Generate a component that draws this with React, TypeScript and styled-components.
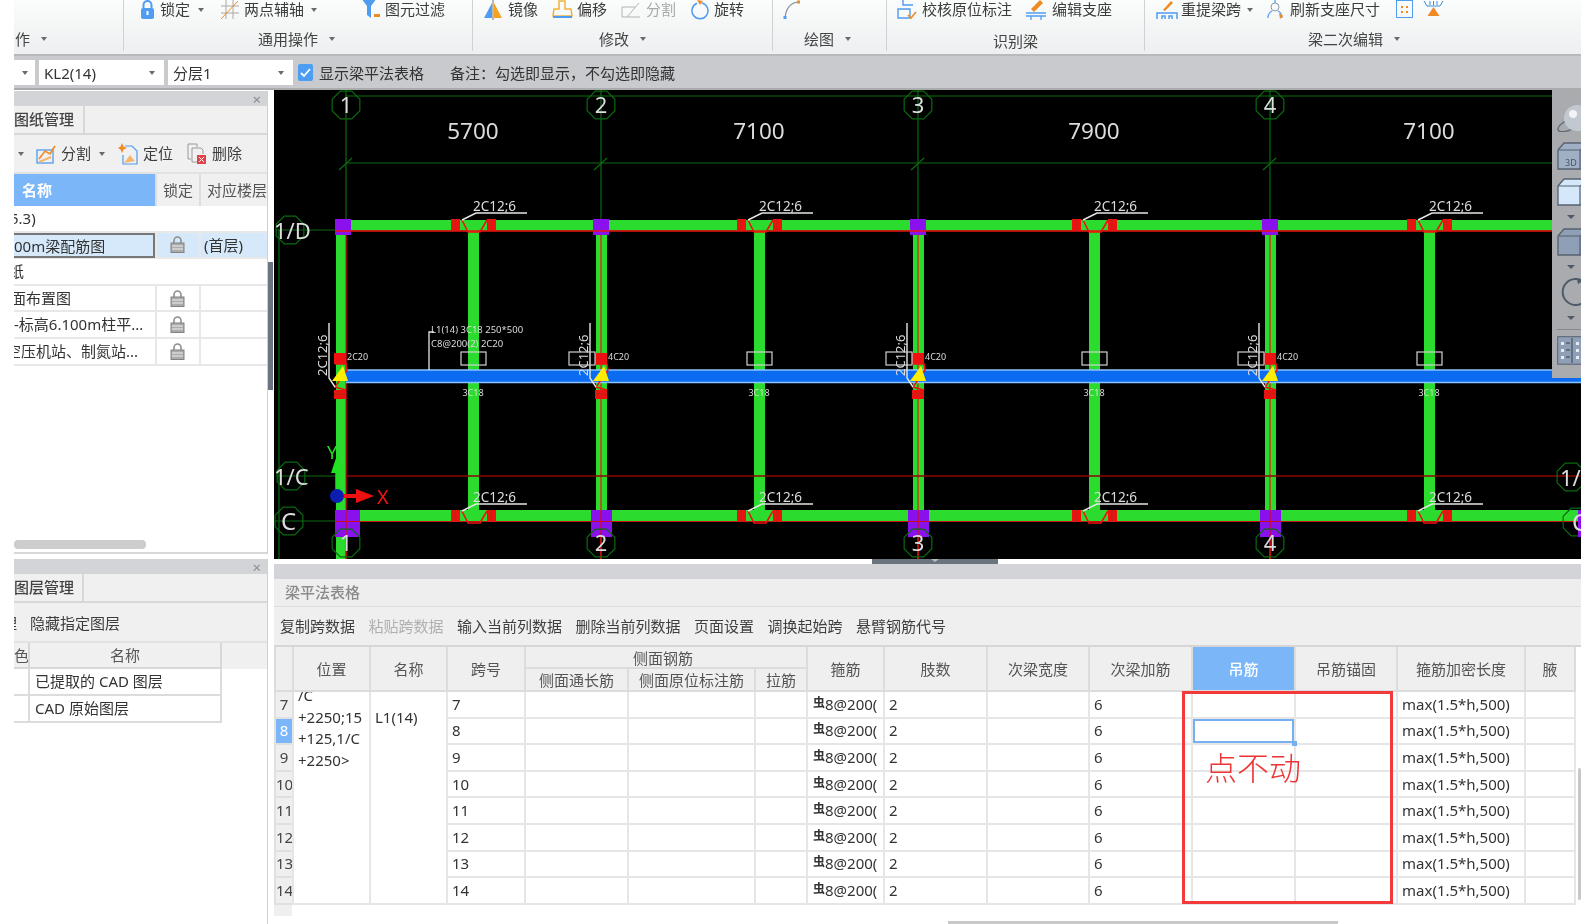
import React from "react";
import styled, { createGlobalStyle } from "styled-components";

const FONT = `"Noto Sans", "Noto Sans CJK SC", "Liberation Sans", sans-serif`;

const Global = createGlobalStyle`
  html, body { margin: 0; padding: 0; background: #fff; }
  body { font-family: ${FONT}; color: #3a3a3a; overflow: hidden; }
  * { box-sizing: border-box; }
`;

const Page = styled.div`
  width: 1594px;
  height: 924px;
  padding: 0 13px 0 14px;
  overflow: hidden;
  background: #fff;
  filter: blur(0.4px);
`;

/* ---------- ribbon ---------- */
const Ribbon = styled.div`
  display: flex;
  height: 56px;
  background: linear-gradient(#fbfcfc, #edeff0);
  border-bottom: 2px solid #b7b9bb;
`;
const Group = styled.div<{ $w: number; $pad: number; $last?: boolean }>`
  width: ${(p) => p.$w}px;
  flex: none;
  height: 51px;
  padding-left: ${(p) => p.$pad}px;
  border-right: ${(p) => (p.$last ? "none" : "1px solid #cfd1d3")};
  display: flex;
  flex-direction: column;
`;
const Tools = styled.div`
  display: flex;
  align-items: center;
  height: 19px;
  overflow: visible;
`;
const Tool = styled.div<{ $ml?: number; $gap?: number; $off?: boolean }>`
  display: flex;
  align-items: center;
  gap: ${(p) => p.$gap ?? 5}px;
  margin-left: ${(p) => p.$ml ?? 0}px;
  font-size: 15px;
  line-height: 19px;
  white-space: nowrap;
  color: ${(p) => (p.$off ? "#a8a8a8" : "#3c3c3c")};
`;
const Caret = styled.span<{ $ml?: number }>`
  display: inline-block;
  margin-left: ${(p) => p.$ml ?? 3}px;
  border-top: 4px solid #6a6a6a;
  border-left: 3.5px solid transparent;
  border-right: 3.5px solid transparent;
`;
const GroupLabel = styled.div<{ $pad: number; $drop?: number }>`
  display: flex;
  align-items: center;
  gap: 8px;
  margin-top: ${(p) => 10 + (p.$drop ?? 0)}px;
  padding-left: ${(p) => p.$pad}px;
  font-size: 15px;
  line-height: 20px;
  white-space: nowrap;
  color: #444;
`;

/* ---------- property bar ---------- */
const PropBar = styled.div`
  height: 34px;
  padding: 4px 0 3px;
  display: flex;
  align-items: stretch;
  gap: 4px;
  background: #c8cacd;
  border-bottom: 2px solid #a9abad;
  font-size: 15px;
`;
const Combo = styled.div<{ $w: number }>`
  width: ${(p) => p.$w}px;
  padding-left: 5px;
  padding-right: 9px;
  background: #fff;
  display: flex;
  align-items: center;
  justify-content: space-between;
  color: #333;
`;
const Check = styled.span`
  width: 15px;
  height: 17px;
  margin: 4px 2px 0 1px;
  background: #4d9df2;
  border-radius: 2px;
  display: flex;
  align-items: center;
  justify-content: center;
`;
const BarText = styled.span<{ $ml?: number }>`
  margin-left: ${(p) => p.$ml ?? 0}px;
  line-height: 27px;
  color: #333;
`;

/* ---------- main ---------- */
const Main = styled.div`
  display: flex;
  height: 834px;
`;
const LeftCol = styled.div`
  width: 254px;
  flex: none;
  padding-top: 1px;
  display: flex;
  flex-direction: column;
  gap: 5px;
`;
const VSplit = styled.div`
  width: 6px;
  flex: none;
  padding-top: 172px;
`;
const VHandle = styled.div`
  width: 5px;
  height: 128px;
  background: #69747e;
`;
const RightCol = styled.div`
  flex: 1;
  min-width: 0;
  display: flex;
  flex-direction: column;
`;
const Panel = styled.div<{ $h?: number; $grow?: boolean }>`
  ${(p) => (p.$h ? `height:${p.$h}px;` : "")}
  ${(p) => (p.$grow ? "flex:1;" : "")}
  background: #fff;
  border-right: 1px solid #d0d0d0;
  display: flex;
  flex-direction: column;
  position: relative;
`;
const TitleBar = styled.div`
  height: 15px;
  flex: none;
  background: #d2d4d8;
  display: flex;
  align-items: center;
  justify-content: flex-end;
  padding-right: 6px;
  color: #8a8c90;
  font-size: 15px;
`;
const TabRow = styled.div<{ $h: number }>`
  height: ${(p) => p.$h}px;
  flex: none;
  background: #f0f0f0;
  border-bottom: 2px solid #d8d8d8;
  display: flex;
`;
const Tab = styled.div<{ $w: number }>`
  width: ${(p) => p.$w}px;
  border-right: 2px solid #d8d8d8;
  font-size: 15px;
  line-height: 27px;
  color: #444;
  font-weight: 500;
`;
const PanelTools = styled.div<{ $h: number; $pt?: number }>`
  height: ${(p) => p.$h}px;
  flex: none;
  background: #f0f0f0;
  display: flex;
  align-items: center;
  overflow: hidden;
  padding-top: ${(p) => p.$pt ?? 0}px;
  font-size: 15px;
  color: #444;
  border-bottom: 2px solid #e2e2e2;
`;
const DrawHead = styled.div`
  display: grid;
  grid-template-columns: 141px 44px 68px;
  height: 32px;
  flex: none;
  background: #f0f0f0;
  font-size: 15px;
  color: #555;
`;
const NameHead = styled.div`
  background: #7ab6f8;
  color: #fff;
  font-weight: 600;
  font-size: 15px;
  line-height: 32px;
  padding-left: 8px;
`;
const HeadCell = styled.div<{ $left?: boolean }>`
  border-left: 2px solid #dedede;
  line-height: 32px;
  text-align: ${(p) => (p.$left ? "left" : "center")};
  padding-left: ${(p) => (p.$left ? 6 : 0)}px;
  white-space: nowrap;
  overflow: hidden;
`;
const DrawRow = styled.div<{ $sel?: boolean }>`
  display: grid;
  grid-template-columns: 141px 44px 68px;
  height: 26.6px;
  flex: none;
  font-size: 15px;
  color: #333;
  background: ${(p) => (p.$sel ? "#d6e9fb" : "#fff")};
  border-bottom: 2px solid #e8e8e8;
`;
const DrawName = styled.div<{ $shift?: number; $sel?: boolean; $span?: boolean }>`
  ${(p) => (p.$span ? "grid-column: 1 / span 3;" : "")}
  overflow: hidden;
  white-space: nowrap;
  line-height: 25px;
  ${(p) => (p.$sel ? "border: 2px solid #777; border-left: none; line-height: 22px; margin-bottom:-1px;" : "")}
  & > span {
    display: inline-block;
    margin-left: ${(p) => p.$shift ?? 0}px;
  }
`;
const DrawCell = styled.div`
  border-left: 2px solid #e8e8e8;
  display: flex;
  align-items: center;
  justify-content: center;
  padding-right: 2px;
  line-height: 24px;
`;
const DrawFloor = styled(DrawCell)`
  justify-content: flex-start;
  padding-left: 3px;
`;
const HScrollTrack = styled.div`
  margin-top: auto;
  height: 14px;
  border-bottom: 2px solid #d8d8d8;
`;
const HThumb = styled.div`
  width: 132px;
  height: 9px;
  border-radius: 4px;
  background: #cdcdcd;
`;
const LayerHead = styled.div`
  display: grid;
  grid-template-columns: 16px 192px;
  height: 26px;
  flex: none;
  background: #f0f0f0;
  font-size: 15px;
  color: #555;
  overflow: hidden;
`;
const LayerHeadCell = styled.div`
  border-right: 2px solid #d8d8d8;
  border-bottom: 2px solid #d8d8d8;
  line-height: 24px;
  text-align: center;
  white-space: nowrap;
  overflow: hidden;
`;
const LayerRow = styled.div`
  display: grid;
  grid-template-columns: 16px 192px;
  height: 26.5px;
  flex: none;
  font-size: 15px;
  color: #333;
`;
const LayerCell = styled.div`
  border-right: 2px solid #dcdcdc;
  border-bottom: 2px solid #dcdcdc;
  padding-left: 5px;
  line-height: 25px;
  white-space: nowrap;
`;

/* ---------- canvas ---------- */
const CanvasWrap = styled.div`
  position: relative;
  height: 469px;
  flex: none;
  background: #000;
  overflow: hidden;
`;
const CanvasSvg = styled.svg`
  display: block;
`;
const CadText = styled.text<{ $size: number; $fill?: string }>`
  font-family: "Noto Sans", "Liberation Sans", sans-serif;
  font-size: ${(p) => p.$size}px;
  fill: ${(p) => p.$fill ?? "#dcdcdc"};
`;
const ViewStrip = styled.div`
  position: absolute;
  top: 0;
  right: 0;
  width: 29px;
  height: 288px;
  background: #a9abae;
  overflow: hidden;
  padding-left: 5px;
  display: flex;
  flex-direction: column;
  align-items: flex-start;
`;
const StripItem = styled.div<{ $mt: number }>`
  margin-top: ${(p) => p.$mt}px;
  display: flex;
  flex: none;
`;
const StripCaret = styled.span<{ $mt: number }>`
  margin: ${(p) => p.$mt}px 0 0 10px;
  border-top: 4px solid #4f5a68;
  border-left: 4px solid transparent;
  border-right: 4px solid transparent;
`;
const StripRule = styled.div`
  margin-top: 9px;
  width: 24px;
  height: 1px;
  background: #85878a;
  flex: none;
`;
const HSplit = styled.div`
  height: 5px;
  flex: none;
  padding-left: 598px;
`;
const HHandle = styled.div`
  width: 126px;
  height: 5px;
  background: #69747e;
  display: flex;
  justify-content: center;
  &::after {
    content: "";
    border-top: 3px solid #b8bcc0;
    border-left: 4px solid transparent;
    border-right: 4px solid transparent;
  }
`;

/* ---------- table panel ---------- */
const GridPanel = styled.div`
  flex: 1;
  min-height: 0;
  display: flex;
  flex-direction: column;
  position: relative;
`;
const GridTitle = styled.div`
  height: 28px;
  flex: none;
  background: #eeeeee;
  border-bottom: 1px solid #dcdcdc;
  padding-left: 11px;
  font-size: 15px;
  line-height: 27px;
  color: #8b8b8b;
  font-weight: 500;
`;
const GridTools = styled.div`
  height: 40px;
  flex: none;
  background: #efefef;
  padding: 0 0 1px 6px;
  display: flex;
  align-items: center;
  gap: 13.5px;
  font-size: 15px;
  border-bottom: 2px solid #d6d6d6;
`;
const GridTool = styled.span<{ $off?: boolean }>`
  white-space: nowrap;
  color: ${(p) => (p.$off ? "#b0b0b0" : "#3f3f3f")};
`;
const TableWrap = styled.div`
  position: relative;
  flex: none;
  height: 255px;
`;
const Table = styled.table`
  width: 1300px;
  table-layout: fixed;
  border-collapse: collapse;
  font-size: 15px;
  color: #333;
`;
const Th = styled.th<{ $sel?: boolean; $pr?: number }>`
  padding: 2px ${(p) => p.$pr ?? 0}px 0 0;
  font-weight: 400;
  font-size: 15px;
  line-height: 17px;
  white-space: nowrap;
  overflow: hidden;
  color: ${(p) => (p.$sel ? "#fff" : "#555")};
  background: ${(p) => (p.$sel ? "#7ab6f8" : "#efefef")};
  border: 2px solid #dcdcdc;
  border-top: none;
  ${(p) => (p.$sel ? "font-weight:500;" : "")}
`;
const Td = styled.td<{ $focus?: boolean }>`
  padding: 0 0 1px 4px;
  height: 26.6px;
  border: 2px solid #e6e6e6;
  white-space: nowrap;
  overflow: hidden;
  position: relative;
  line-height: 20px;
  ${(p) => (p.$focus ? "overflow: visible; box-shadow: inset 0 0 0 2px #74b0f2;" : "")}
  ${(p) =>
    p.$focus
      ? `&::after { content:""; position:absolute; right:-3px; bottom:-3px; width:5px; height:5px; background:#74b0f2; }`
      : ""}
`;
const RowNo = styled.td<{ $sel?: boolean }>`
  padding: 0 0 1px;
  text-align: center;
  font-size: 15px;
  line-height: 20px;
  overflow: hidden;
  white-space: nowrap;
  color: ${(p) => (p.$sel ? "#fff" : "#444")};
  background: ${(p) => (p.$sel ? "#7ab6f8" : "#efefef")};
  border: 2px solid #e0e0e0;
`;
const SpanTd = styled.td`
  padding: 0;
  vertical-align: top;
  border: 2px solid #e6e6e6;
`;
const Clip = styled.div<{ $pad: number; $top: number }>`
  height: 205px;
  overflow: hidden;
  padding-left: ${(p) => p.$pad}px;
  padding-top: ${(p) => Math.max(p.$top, 0)}px;
  line-height: 21.7px;
  white-space: nowrap;
  & > div:first-child {
    margin-top: ${(p) => Math.min(p.$top, 0)}px;
  }
`;
const Rebar = styled.span`
  font-size: 12px;
  font-weight: 600;
  line-height: 0;
  position: relative;
  top: -3px;
`;
const RebarCell = styled(Td)`
  padding-left: 5px;
`;
const Mark = styled.div`
  position: absolute;
  left: 908px;
  top: 44px;
  width: 211px;
  height: 213px;
  border: 3px solid #f23a3a;
  pointer-events: none;
`;
const MarkText = styled.div`
  position: absolute;
  left: 20px;
  top: 50px;
  font-size: 32px;
  line-height: 44px;
  font-family: "Noto Sans CJK SC", sans-serif;
  font-weight: 300;
  color: #ee3535;
  white-space: nowrap;
`;
const Footer = styled.div`
  width: 18px;
  height: 14px;
  background: #efefef;
  flex: none;
`;
const VScroll = styled.div`
  position: absolute;
  right: 0;
  top: 204px;
  width: 3px;
  height: 132px;
  background: #c8c8c8;
  border-radius: 2px;
`;
const BottomScroll = styled.div`
  position: absolute;
  left: 674px;
  bottom: 0;
  width: 390px;
  height: 3px;
  background: #c8c8c8;
`;

/* ---------- icons ---------- */
const BLUE = "#4f9cf0";
const ORG = "#f08a24";
const IconLock = () => (
  <svg width="15" height="20" viewBox="0 0 15 20">
    <path d="M3.5 8V5a4 4 0 018 0v3" fill="none" stroke={BLUE} strokeWidth="2" />
    <rect x="1" y="8" width="13" height="11" rx="2" fill={BLUE} />
    <rect x="6.5" y="11" width="2" height="4" fill="#fff" />
  </svg>
);
const IconAxis = () => (
  <svg width="20" height="20" viewBox="0 0 20 20" fill="none">
    <path d="M6 0v19M13 0v19M1 6h18M1 13h18" stroke="#a9a9a9" />
    <path d="M1 19L18 1" stroke={ORG} />
  </svg>
);
const IconFilter = () => (
  <svg width="20" height="20" viewBox="0 0 20 20">
    <path d="M0-2h16L10 6v12l-4-3V6z" fill={BLUE} />
    <rect x="13" y="14" width="6" height="3" fill={ORG} />
  </svg>
);
const IconMirror = () => (
  <svg width="18" height="20" viewBox="0 0 18 20">
    <path d="M8 3v15H0z" fill={BLUE} />
    <path d="M10 3v15h8z" fill="#f4a21f" />
    <path d="M9 0v20" stroke="#555" strokeWidth="0.8" />
  </svg>
);
const IconOffset = () => (
  <svg width="21" height="20" viewBox="0 0 21 20" fill="none">
    <path d="M7 1h6v8h6l1 7H1l1-7h5z" stroke="#f0b23c" strokeWidth="1.5" />
    <path d="M1 17h19" stroke={BLUE} strokeWidth="2" />
  </svg>
);
const IconSplit = () => (
  <svg width="20" height="20" viewBox="0 0 20 20" fill="none" stroke="#b3b3b3">
    <path d="M1 17h18M1 17V7h13M6 17l12-14" />
  </svg>
);
const IconRotate = () => (
  <svg width="18" height="20" viewBox="0 0 18 20" fill="none">
    <path d="M11 3a8 8 0 11-5 .3" stroke={BLUE} strokeWidth="1.5" />
    <path d="M6 0l6 1-3 4z" fill={ORG} />
  </svg>
);
const IconCurve = () => (
  <svg width="17" height="20" viewBox="0 0 17 20" fill="none">
    <path d="M2 18C3 8 7 3 15 2" stroke="#7b8a99" strokeWidth="1.2" />
    <rect x="0.5" y="16" width="3" height="3" fill={BLUE} />
    <rect x="14" y="0.5" width="3" height="3" fill={ORG} />
  </svg>
);
const IconCheckBeam = () => (
  <svg width="21" height="20" viewBox="0 0 21 20" fill="none">
    <path d="M6 0v5H16M1 9h12v9H1z" stroke={BLUE} strokeWidth="1.4" />
    <path d="M11 15l3 3 5-6" stroke={ORG} strokeWidth="1.6" />
  </svg>
);
const IconEditSeat = () => (
  <svg width="20" height="20" viewBox="0 0 20 20" fill="none">
    <path d="M5 9L14 0l3 3-9 9z" fill={ORG} />
    <path d="M0 13h20M0 16h20M5 16v4M15 16v4" stroke={BLUE} strokeWidth="1.3" />
  </svg>
);
const IconRepick = () => (
  <svg width="22" height="20" viewBox="0 0 22 20" fill="none">
    <path d="M7 10L15 1l2 2-8 8z" fill={ORG} />
    <path d="M1 19v-6h20v6M6 19v-3h3v3M13 19v-3h3v3" stroke={BLUE} strokeWidth="1.5" />
  </svg>
);
const IconRefresh = () => (
  <svg width="20" height="20" viewBox="0 0 20 20" fill="none">
    <circle cx="10" cy="7" r="4" stroke="#8f9aa6" />
    <path d="M3 18c0-4 2-6 4-7M17 18c0-4-2-6-4-7M10 0v3" stroke={BLUE} strokeWidth="1.2" />
    <path d="M14 13l4 3-3 3z" fill={ORG} />
  </svg>
);
const IconDots = () => (
  <svg width="17" height="20" viewBox="0 0 17 20" fill="none">
    <rect x="0.5" y="0.5" width="16" height="17" stroke={BLUE} />
    <path d="M5 6h2v2H5zM10 6h2v2h-2zM5 11h2v2H5zM10 11h2v2h-2z" fill={ORG} />
  </svg>
);
const IconAnchor = () => (
  <svg width="21" height="20" viewBox="0 0 21 20" fill="none">
    <path d="M1 1l3 5h13l3-5M7 1v4M10.5 1v4M14 1v4" stroke="#3f8fd8" />
    <path d="M10.5 7l6 9h-12z" fill={ORG} />
  </svg>
);
const IconSplitDoc = () => (
  <svg width="20" height="20" viewBox="0 0 20 20" fill="none">
    <rect x="1" y="6" width="16" height="13" stroke={BLUE} strokeWidth="1.3" />
    <path d="M3 15l6-8 5 3 5-8" stroke={ORG} strokeWidth="1.6" />
    <path d="M3 18l12-5" stroke="#f4b56c" strokeWidth="2" />
  </svg>
);
const IconLocate = () => (
  <svg width="20" height="22" viewBox="0 0 20 22" fill="none">
    <path d="M4 0l1.5 3.5L9 5 5.5 6.5 4 10 2.5 6.5 0 5l2.5-1.5z" fill={ORG} />
    <path d="M7 3h7l5 5v13H5v-9" stroke={BLUE} strokeWidth="1.2" />
    <path d="M6 20l6-8 5 6z" fill="#f4b56c" />
  </svg>
);
const IconDelete = () => (
  <svg width="20" height="22" viewBox="0 0 20 22" fill="none">
    <path d="M1 1h9v3M1 1v15h3" stroke="#9a9a9a" />
    <path d="M5 5h9l2 2v4M5 5v14h5" stroke="#9a9a9a" />
    <rect x="10" y="12" width="9" height="9" fill="#e0444a" />
    <path d="M12 14l5 5M17 14l-5 5" stroke="#fff" />
  </svg>
);
const IconPad = () => (
  <svg width="15" height="17" viewBox="0 0 15 17" fill="none">
    <path d="M4 7V4.5a3.5 3.5 0 017 0V7" stroke="#8e8e8e" strokeWidth="1.6" />
    <rect x="1" y="7" width="13" height="9.5" fill="#ababab" stroke="#828282" />
    <path d="M2 10h11M2 13h11" stroke="#eee" />
  </svg>
);
const CheckMark = () => (
  <svg width="11" height="10" viewBox="0 0 11 10" fill="none">
    <path d="M1 5l3 3 6-7" stroke="#fff" strokeWidth="1.8" />
  </svg>
);
const Cube = ({ fill, label }: { fill: string; label?: string }) => (
  <svg width="34" height="28" viewBox="0 0 34 28" fill="none">
    <path d="M1 8L7 1h26v26H1z" fill={fill} stroke="#56616f" strokeWidth="1.3" />
    <path d="M1 8h22v19M23 8l10-7" stroke="#56616f" strokeWidth="1.2" />
    {label ? (
      <CadText x="8" y="24" $size={9} $fill="#4a5563">
        {label}
      </CadText>
    ) : null}
  </svg>
);

/* ---------- CAD drawing ---------- */
const COLS = [346, 601, 918, 1270];
const SPANS = [473, 759, 1094, 1429];
const DIMS = ["5700", "7100", "7900", "7100"];
const GREEN = "#2bdc2f";
const AXIS = "#0a6a10";
const RED = "#ee1111";
const BEAM_BLUE = "#0b6cf2";

const Bubble = ({ x, y, r = 15 }: { x: number; y: number; r?: number }) => {
  const pts = Array.from({ length: 8 }, (_, i) => {
    const a = (Math.PI * 2 * i) / 8 + Math.PI / 8;
    return `${x + r * Math.cos(a)},${y + r * Math.sin(a)}`;
  }).join(" ");
  return <polygon points={pts} fill="none" stroke={AXIS} strokeWidth="1.2" />;
};

const Hanger = ({ cx, y }: { cx: number; y: number }) => (
  <g>
    <rect x={cx - 22} y={y} width="9" height="12" fill={RED} />
    <rect x={cx + 14} y={y} width="9" height="12" fill={RED} />
    <path d={`M${cx - 18} ${y}v12M${cx + 18} ${y}v12`} stroke="#8a3a10" strokeWidth="0.7" />
    <path
      d={`M${cx - 11} ${y + 1}L${cx - 5} ${y + 13}H${cx + 7}L${cx + 14} ${y + 1}`}
      fill="none"
      stroke={RED}
      strokeWidth="1.6"
    />
    <path d={`M${cx - 11} ${y + 1}L${cx + 3} ${y - 6}H${cx + 54}`} fill="none" stroke="#e6e6e6" strokeWidth="1.4" />
    <CadText x={cx} y={y - 8} $size={13.5}>
      2C12;6
    </CadText>
  </g>
);

const Junction = ({ x, first }: { x: number; first?: boolean }) => {
  const left = first ? 334 : x - 6;
  return (
    <g>
      <rect x={left} y={353} width="12" height="11" fill={RED} />
      <rect x={left} y={390} width="12" height="9" fill={RED} />
      <path d={`M${left} 394h12`} stroke="#8a3a10" strokeWidth="0.7" />
      <path
        d={`M${left + 1} 364l11 0 1 6-12 17 11 3`}
        fill="none"
        stroke={RED}
        strokeWidth="1.5"
      />
      <path d={`M${left - 2} 381L${left + 9} 366l5 15z`} fill="#ffee00" />
      <path d={`M${left - 5} 323v55l6 9`} fill="none" stroke="#e6e6e6" strokeWidth="1.4" />
      <CadText x={0} y={0} $size={13} transform={`translate(${left - 7} 376) rotate(-90)`}>
        2C12;6
      </CadText>
      <CadText x={left + 13} y={360} $size={9}>
        {first ? "2C20" : "4C20"}
      </CadText>
      {first ? null : (
        <rect x={left - 26} y={352} width="26" height="13" fill="none" stroke="#cfcfcf" strokeWidth="1.2" />
      )}
    </g>
  );
};

const Drawing = () => (
  <CanvasSvg width="1307" height="469" viewBox="274 90 1307 469">
    {/* grid */}
    <path d="M346 96H1581M346 163H1581M279 230V559" stroke={AXIS} strokeWidth="1.2" fill="none" />
    <path d="M276 230H346M276 476H346M274 521H346" stroke={AXIS} strokeWidth="1.2" />
    {COLS.map((x) => (
      <g key={x}>
        <path d={`M${x} 90V235`} stroke={AXIS} strokeWidth="1.2" />
        <path d={`M${x - 7} 170L${x + 6} 158`} stroke={AXIS} strokeWidth="1.2" />
        <Bubble x={x} y={105} />
        <CadText x={x} y={113} $size={22} textAnchor="middle">
          {COLS.indexOf(x) + 1}
        </CadText>
      </g>
    ))}
    {DIMS.map((d, i) => (
      <CadText key={i} x={SPANS[i]} y={139} $size={22.5} textAnchor="middle">
        {d}
      </CadText>
    ))}
    {/* secondary beams */}
    {SPANS.map((x) => (
      <rect key={x} x={x - 5} y={225} width="11" height="290" fill={GREEN} />
    ))}
    {/* primary beams */}
    <rect x={336} y={231} width="10" height="328" fill={GREEN} />
    {COLS.slice(1).map((x) => (
      <rect key={x} x={x - 5} y={231} width="11" height="285" fill={GREEN} />
    ))}
    {COLS.map((x) => (
      <path key={x} d={`M${x} 231V559`} stroke={RED} strokeWidth="1.2" />
    ))}
    {/* top and bottom beams */}
    <rect x={346} y={220} width="1235" height="10.5" fill={GREEN} />
    <rect x={346} y={510} width="1235" height="11" fill={GREEN} />
    {/* 1/C line */}
    <path d="M346 476H1581" stroke="#8c0606" strokeWidth="1.3" />
    {/* columns */}
    <rect x={335} y={219} width="16" height="16" fill="#8a10ee" />
    {COLS.slice(1).map((x) => (
      <rect key={x} x={x - 8} y={219} width="16" height="16" fill="#8a10ee" />
    ))}
    <rect x={335} y={510} width="25" height="27" fill="#8a10ee" />
    {COLS.slice(1).map((x) => (
      <rect key={x} x={x - 10} y={510} width="21" height="27" fill="#8a10ee" />
    ))}
    {COLS.map((x) => (
      <path key={x} d={`M${x} 510V559`} stroke="#d01010" strokeWidth="1.2" />
    ))}
    <path d="M335 231H1581" stroke={RED} strokeWidth="1.4" />
    <path d="M335 521.5H1581" stroke="#c81010" strokeWidth="1.2" />
    {/* hangers */}
    {SPANS.map((x) => (
      <g key={x}>
        <Hanger cx={x} y={219} />
        <Hanger cx={x} y={510} />
        <rect x={x - 12} y={352} width="25" height="13" fill="none" stroke="#d2d2d2" strokeWidth="1.2" />
        <CadText x={x} y={396} $size={9} textAnchor="middle">
          3C18
        </CadText>
      </g>
    ))}
    {/* L1 beam */}
    <rect x={346} y={370} width="1235" height="12" fill={BEAM_BLUE} />
    <path d="M346 370H1581M346 382.5H1581" stroke="#8ac2ff" strokeWidth="1.3" />
    {COLS.map((x, i) => (
      <Junction key={x} x={x} first={i === 0} />
    ))}
    {/* L1 label */}
    <path d="M429 370V332h5" fill="none" stroke="#e6e6e6" strokeWidth="1.3" />
    <CadText x={431} y={333} $size={9.5}>
      L1(14) 3C18 250*500
    </CadText>
    <CadText x={431} y={347} $size={9.5}>
      C8@200(2) 2C20
    </CadText>
    {/* origin */}
    <path d="M337 492V470" stroke="#22e022" strokeWidth="3.5" />
    <path d="M337 455l-6 18h12z" fill="#22e022" />
    <CadText x={327} y={459} $size={18} $fill="#22e022">
      Y
    </CadText>
    <path d="M344 496H358" stroke={RED} strokeWidth="4" />
    <path d="M356 489l18 7-18 7z" fill={RED} />
    <circle cx={337} cy={496} r={7} fill="#0a1fb0" />
    <CadText x={377} y={504} $size={20} $fill="#f01212">
      X
    </CadText>
    {/* left and right bubbles */}
    <Bubble x={290} y={230} />
    <CadText x={274} y={239} $size={22}>
      1/D
    </CadText>
    <Bubble x={291} y={476} />
    <CadText x={274} y={485} $size={22}>
      1/C
    </CadText>
    <Bubble x={289} y={521} />
    <CadText x={281} y={530} $size={24}>
      C
    </CadText>
    <Bubble x={1571} y={477} />
    <CadText x={1560} y={486} $size={22}>
      1/
    </CadText>
    <Bubble x={1577} y={522} />
    <rect x={1578} y={510} width="3" height="27" fill="#8a10ee" />
    <CadText x={1572} y={531} $size={24}>
      C
    </CadText>
    {COLS.map((x, i) => (
      <g key={x}>
        <Bubble x={x} y={543} />
        <CadText x={x} y={551} $size={22} textAnchor="middle">
          {i + 1}
        </CadText>
      </g>
    ))}
  </CanvasSvg>
);

/* ---------- data ---------- */
const ROWS = [7, 8, 9, 10, 11, 12, 13, 14];
const COL_W = [18, 77, 77, 78, 103, 127, 52, 77, 103, 102, 103, 103, 102, 128, 50];

const App = () => (
  <Page>
    <Global />
    <Ribbon>
      <Group $w={110} $pad={0}>
        <Tools />
        <GroupLabel $pad={1}>
          作 <Caret />
        </GroupLabel>
      </Group>
      <Group $w={349} $pad={16}>
        <Tools>
          <Tool>
            <IconLock />
            锁定
            <Caret />
          </Tool>
          <Tool $ml={16} $gap={4}>
            <IconAxis />
            两点辅轴
            <Caret />
          </Tool>
          <Tool $ml={44} $gap={4}>
            <IconFilter />
            图元过滤
          </Tool>
        </Tools>
        <GroupLabel $pad={118}>
          通用操作 <Caret />
        </GroupLabel>
      </Group>
      <Group $w={300} $pad={11}>
        <Tools>
          <Tool $gap={6}>
            <IconMirror />
            镜像
          </Tool>
          <Tool $ml={14} $gap={4}>
            <IconOffset />
            偏移
          </Tool>
          <Tool $ml={14} $off>
            <IconSplit />
            分割
          </Tool>
          <Tool $ml={15}>
            <IconRotate />
            旋转
          </Tool>
        </Tools>
        <GroupLabel $pad={115}>
          修改 <Caret />
        </GroupLabel>
      </Group>
      <Group $w={114} $pad={10}>
        <Tools>
          <Tool>
            <IconCurve />
          </Tool>
        </Tools>
        <GroupLabel $pad={21}>
          绘图 <Caret />
        </GroupLabel>
      </Group>
      <Group $w={258} $pad={10}>
        <Tools>
          <Tool $gap={4}>
            <IconCheckBeam />
            校核原位标注
          </Tool>
          <Tool $ml={14} $gap={6}>
            <IconEditSeat />
            编辑支座
          </Tool>
        </Tools>
        <GroupLabel $pad={96} $drop={2}>
          识别梁
        </GroupLabel>
      </Group>
      <Group $w={436} $pad={11} $last>
        <Tools>
          <Tool $gap={3}>
            <IconRepick />
            重提梁跨
            <Caret />
          </Tool>
          <Tool $ml={12} $gap={5}>
            <IconRefresh />
            刷新支座尺寸
          </Tool>
          <Tool $ml={16}>
            <IconDots />
          </Tool>
          <Tool $ml={10}>
            <IconAnchor />
          </Tool>
        </Tools>
        <GroupLabel $pad={152}>
          梁二次编辑 <Caret />
        </GroupLabel>
      </Group>
    </Ribbon>

    <PropBar>
      <Combo $w={21}>
        <span />
        <Caret />
      </Combo>
      <Combo $w={125}>
        KL2(14)
        <Caret />
      </Combo>
      <Combo $w={125}>
        分层1
        <Caret />
      </Combo>
      <Check>
        <CheckMark />
      </Check>
      <BarText>显示梁平法表格</BarText>
      <BarText $ml={22}>备注：勾选即显示，不勾选即隐藏</BarText>
    </PropBar>

    <Main>
      <LeftCol>
        <Panel $h={463}>
          <TitleBar>×</TitleBar>
          <TabRow $h={29}>
            <Tab $w={71}>图纸管理</Tab>
          </TabRow>
          <PanelTools $h={39}>
            <Caret $ml={4} />
            <Tool $ml={12}>
              <IconSplitDoc />
              分割
              <Caret />
            </Tool>
            <Tool $ml={13}>
              <IconLocate />
              定位
            </Tool>
            <Tool $ml={14}>
              <IconDelete />
              删除
            </Tool>
          </PanelTools>
          <DrawHead>
            <NameHead>名称</NameHead>
            <HeadCell>锁定</HeadCell>
            <HeadCell $left>对应楼层</HeadCell>
          </DrawHead>
          <DrawRow>
            <DrawName $span $shift={-4}>
              <span>5.3)</span>
            </DrawName>
          </DrawRow>
          <DrawRow $sel>
            <DrawName $sel>
              <span>00m梁配筋图</span>
            </DrawName>
            <DrawCell>
              <IconPad />
            </DrawCell>
            <DrawFloor>(首层)</DrawFloor>
          </DrawRow>
          <DrawRow>
            <DrawName $span $shift={-5}>
              <span>纸</span>
            </DrawName>
          </DrawRow>
          <DrawRow>
            <DrawName $shift={-3}>
              <span>面布置图</span>
            </DrawName>
            <DrawCell>
              <IconPad />
            </DrawCell>
            <DrawCell />
          </DrawRow>
          <DrawRow>
            <DrawName>
              <span>-标高6.100m柱平...</span>
            </DrawName>
            <DrawCell>
              <IconPad />
            </DrawCell>
            <DrawCell />
          </DrawRow>
          <DrawRow>
            <DrawName $shift={-8}>
              <span>空压机站、制氮站...</span>
            </DrawName>
            <DrawCell>
              <IconPad />
            </DrawCell>
            <DrawCell />
          </DrawRow>
          <HScrollTrack>
            <HThumb />
          </HScrollTrack>
        </Panel>
        <Panel $grow>
          <TitleBar>×</TitleBar>
          <TabRow $h={29}>
            <Tab $w={70}>图层管理</Tab>
          </TabRow>
          <PanelTools $h={40} $pt={3}>
            <Tool $ml={-12}>理</Tool>
            <Tool $ml={13}>隐藏指定图层</Tool>
          </PanelTools>
          <LayerHead>
            <LayerHeadCell>色</LayerHeadCell>
            <LayerHeadCell>名称</LayerHeadCell>
          </LayerHead>
          <LayerRow>
            <LayerCell />
            <LayerCell>已提取的 CAD 图层</LayerCell>
          </LayerRow>
          <LayerRow>
            <LayerCell />
            <LayerCell>CAD 原始图层</LayerCell>
          </LayerRow>
        </Panel>
      </LeftCol>
      <VSplit>
        <VHandle />
      </VSplit>
      <RightCol>
        <CanvasWrap>
          <Drawing />
          <ViewStrip>
            <StripItem $mt={15}>
              <svg width="34" height="27" viewBox="0 0 34 27" fill="none">
                <ellipse cx="12" cy="20" rx="12" ry="5" transform="rotate(-25 12 20)" stroke="#5f6b78" strokeWidth="1.4" />
                <circle cx="20" cy="13" r="13" fill="#c2c8d0" />
                <circle cx="16" cy="9" r="4" fill="#f2f4f6" />
              </svg>
            </StripItem>
            <StripItem $mt={10}>
              <Cube fill="#9fb0c6" label="3D" />
            </StripItem>
            <StripItem $mt={8}>
              <Cube fill="#d5e7fb" />
            </StripItem>
            <StripCaret $mt={9} />
            <StripItem $mt={9}>
              <Cube fill="#8f9fb5" />
            </StripItem>
            <StripCaret $mt={9} />
            <StripItem $mt={9}>
              <svg width="34" height="28" viewBox="0 0 34 28" fill="none">
                <path d="M28 4A13 13 0 1028 24" stroke="#4f5a68" strokeWidth="2" transform="translate(-1 0)" />
                <path d="M20 1l6 2-5 3z" fill="#4f5a68" />
              </svg>
            </StripItem>
            <StripCaret $mt={10} />
            <StripRule />
            <StripItem $mt={6}>
              <svg width="34" height="29" viewBox="0 0 34 29" fill="none">
                <rect x="0.7" y="0.7" width="33" height="27.5" fill="#8f9fb5" stroke="#56616f" />
                <path d="M4 6h3v3H4zM4 13h3v3H4zM4 20h3v3H4zM19 6h3v3h-3zM19 13h3v3h-3zM19 20h3v3h-3z" fill="#e6ebf1" />
                <path d="M9 7h4M9 14h4M9 21h4M15 2v25M24 7h4M24 14h4M24 21h4" stroke="#37414e" />
              </svg>
            </StripItem>
          </ViewStrip>
        </CanvasWrap>
        <HSplit>
          <HHandle />
        </HSplit>
        <GridPanel>
          <TitleBar />
          <GridTitle>梁平法表格</GridTitle>
          <GridTools>
            <GridTool>复制跨数据</GridTool>
            <GridTool $off>粘贴跨数据</GridTool>
            <GridTool>输入当前列数据</GridTool>
            <GridTool>删除当前列数据</GridTool>
            <GridTool>页面设置</GridTool>
            <GridTool>调换起始跨</GridTool>
            <GridTool>悬臂钢筋代号</GridTool>
          </GridTools>
          <TableWrap>
            <Table>
              <colgroup>
                {COL_W.map((w, i) => (
                  <col key={i} style={{ width: w }} />
                ))}
              </colgroup>
              <thead>
                <tr style={{ height: 21 }}>
                  <Th rowSpan={2} />
                  <Th rowSpan={2}>位置</Th>
                  <Th rowSpan={2}>名称</Th>
                  <Th rowSpan={2}>跨号</Th>
                  <Th colSpan={3} $pr={6}>
                    侧面钢筋
                  </Th>
                  <Th rowSpan={2}>箍筋</Th>
                  <Th rowSpan={2}>肢数</Th>
                  <Th rowSpan={2}>次梁宽度</Th>
                  <Th rowSpan={2}>次梁加筋</Th>
                  <Th rowSpan={2} $sel>
                    吊筋
                  </Th>
                  <Th rowSpan={2}>吊筋锚固</Th>
                  <Th rowSpan={2}>箍筋加密长度</Th>
                  <Th rowSpan={2}>腋</Th>
                </tr>
                <tr style={{ height: 23 }}>
                  <Th>侧面通长筋</Th>
                  <Th>侧面原位标注筋</Th>
                  <Th>拉筋</Th>
                </tr>
              </thead>
              <tbody>
                {ROWS.map((n, i) => (
                  <tr key={n}>
                    <RowNo $sel={n === 8}>{n}</RowNo>
                    {i === 0 ? (
                      <>
                        <SpanTd rowSpan={8}>
                          <Clip $pad={4} $top={-7}>
                            <div>/C</div>
                            <div>+2250;15</div>
                            <div>+125,1/C</div>
                            <div>+2250&gt;</div>
                          </Clip>
                        </SpanTd>
                        <SpanTd rowSpan={8}>
                          <Clip $pad={4} $top={15}>
                            <div>L1(14)</div>
                          </Clip>
                        </SpanTd>
                      </>
                    ) : null}
                    <Td>{n}</Td>
                    <Td />
                    <Td />
                    <Td />
                    <RebarCell>
                      <Rebar>虫</Rebar>8@200(
                    </RebarCell>
                    <Td>2</Td>
                    <Td />
                    <Td>6</Td>
                    <Td $focus={n === 8} />
                    <Td />
                    <Td>max(1.5*h,500)</Td>
                    <Td />
                  </tr>
                ))}
              </tbody>
            </Table>
            <Mark>
              <MarkText>点不动</MarkText>
            </Mark>
          </TableWrap>
          <Footer />
          <VScroll />
          <BottomScroll />
        </GridPanel>
      </RightCol>
    </Main>
  </Page>
);

export default App;
